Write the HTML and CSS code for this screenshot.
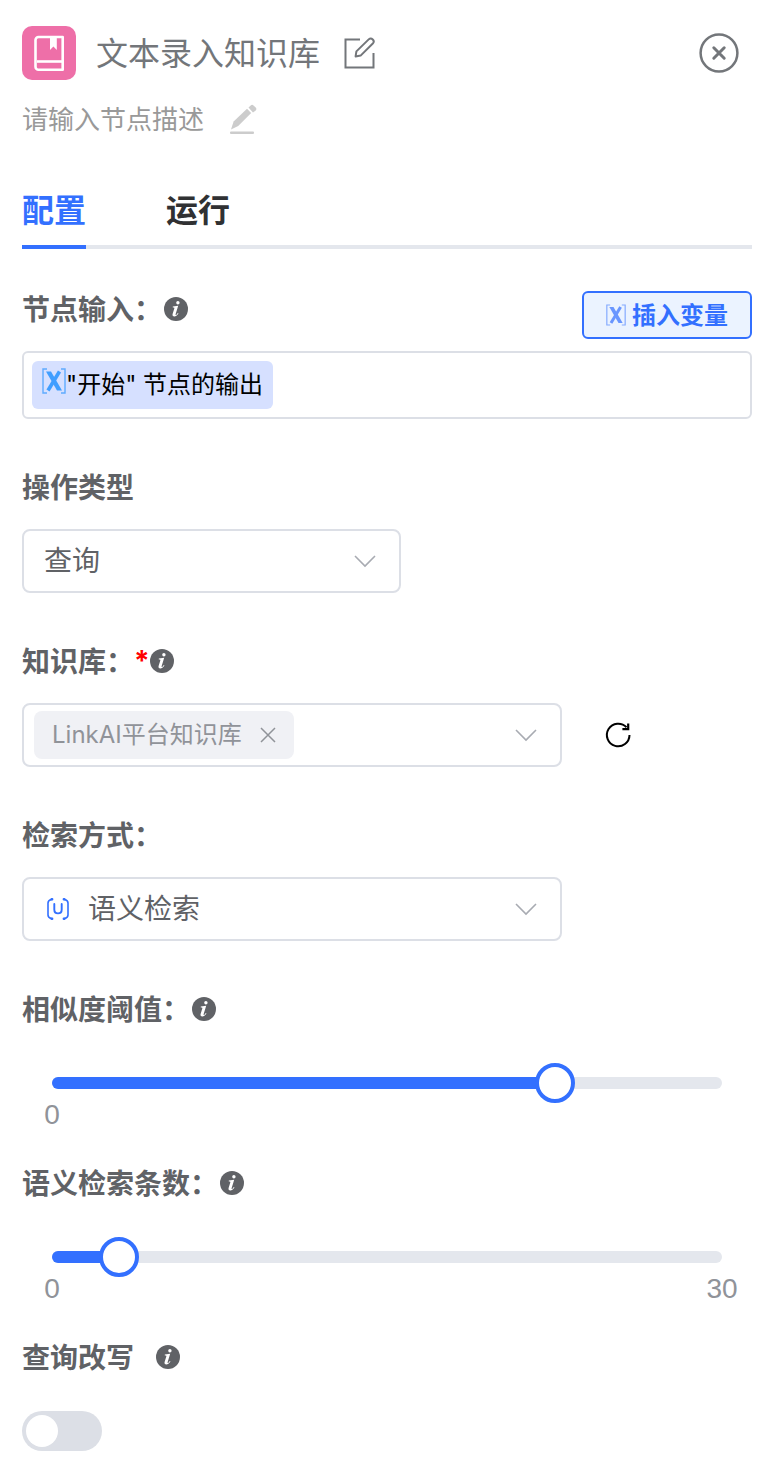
FILE: index.html
```html
<!DOCTYPE html>
<html lang="zh-CN">
<head>
<meta charset="utf-8">
<meta name="viewport" content="width=device-width, initial-scale=1">
<title>文本录入知识库</title>
<link rel="stylesheet" href="styles.css">
</head>
<body>
<svg class="sprite" aria-hidden="true">
  <symbol id="info" viewBox="0 0 24 24">
    <circle cx="12" cy="12" r="12" fill="#606266"/>
    <circle cx="13.900" cy="5.800" r="1.700" fill="#fff"/>
    <path d="M8.800 9.600l5.400-.9-2.600 8.500c-.3 1 .4.9 1.100.2l1.100-1.300.7.5c-1.400 2.100-2.800 2.900-4.100 2.900-1.600 0-2.200-.9-1.800-2.400l1.700-5.500c.3-.9.1-1.100-1.500-1.100z" fill="#fff"/>
  </symbol>
  <symbol id="chevron" viewBox="0 0 24 24">
    <path d="M2 7l10 10L22 7" fill="none" stroke="#a8abb2" stroke-width="1.600"/>
  </symbol>
  <symbol id="variable" viewBox="0 0 24 26">
    <path d="M5 1H1v24h4M19 1h4v24h-4" fill="none" stroke="currentColor" stroke-width="1.400" opacity=".8"/>
    <path d="M4 3.500h5l11 19h-5z" fill="currentColor"/>
    <path d="M17.500 3.500L6 22.500" stroke="currentColor" stroke-width="3.600"/>
  </symbol>
</svg>

<main class="panel">
  <header class="header">
    <svg class="logo" viewBox="0 0 54 54" aria-hidden="true">
      <rect width="54" height="54" rx="10" fill="#ee6fa8"/>
      <path d="M16.500 11h24.200v32.800H16.500a3 3 0 0 1-3-3V14a3 3 0 0 1 3-3z" fill="none" stroke="#fff" stroke-width="2.600" stroke-linejoin="round"/>
      <path d="M15 35.500h25" stroke="#fff" stroke-width="2.600"/>
      <path d="M28 11h6.800v13l-3.400-3.600L28 24z" fill="#fff"/>
    </svg>
    <h1 class="title">文本录入知识库</h1>
    <button class="icon-button title-edit" type="button" aria-label="编辑名称">
      <svg width="32" height="32" viewBox="0 0 32 32" fill="none" stroke="#73767a" stroke-width="2">
        <path d="M16 2.500H1.500v28h28V16"/>
        <path d="M11.600 19.400l.8-5L24.700 2.400a2.900 2.900 0 0 1 4.100 4.100L16.600 18.600z" stroke-linejoin="round"/>
      </svg>
    </button>
    <button class="icon-button close" type="button" aria-label="关闭">
      <svg width="40" height="40" viewBox="0 0 40 40" fill="none" stroke="#73767a" stroke-linecap="round">
        <circle cx="20" cy="20" r="18.400" stroke-width="2.500"/>
        <path d="M14.800 14.800l10.400 10.400M25.200 14.800L14.800 25.200" stroke-width="3"/>
      </svg>
    </button>
  </header>

  <div class="description">
    <span>请输入节点描述</span>
    <button class="icon-button" type="button" aria-label="编辑描述">
      <svg width="28" height="32" viewBox="0 0 28 32" fill="#ccc">
        <path d="M1 25.500l2.600-8L17 4.800l4.200 4.200L8.200 22z"/>
        <path d="M18.500 3.500L20.700 1.400a2 2 0 0 1 2.800 0l2.200 2.200a2 2 0 0 1 0 2.800L23 8.600z"/>
        <rect y="27.500" width="24" height="2.500" rx="1"/>
      </svg>
    </button>
  </div>

  <nav class="tabs" role="tablist">
    <button class="tab tab-active" type="button" role="tab" aria-selected="true">配置</button>
    <button class="tab" type="button" role="tab" aria-selected="false">运行</button>
  </nav>

  <form class="form">
    <div class="field">
      <div class="input-head">
        <label class="label" for="node-input"><span class="label-text">节点输入：</span><svg class="info"><use href="#info"/></svg></label>
        <button class="insert" type="button"><svg class="insert-icon"><use href="#variable"/></svg><span class="insert-text">插入变量</span></button>
      </div>
      <div class="token-box">
        <span class="token"><svg class="token-icon"><use href="#variable"/></svg>"开始" 节点的输出</span>
        <input class="token-input" id="node-input" type="text">
      </div>
    </div>

    <div class="field">
      <label class="label" for="operation"><span class="label-text">操作类型</span></label>
      <div class="select select-small">
        <select class="native" id="operation"><option>查询</option></select>
        <svg class="chevron"><use href="#chevron"/></svg>
      </div>
    </div>

    <div class="field">
      <label class="label" for="knowledge"><span class="label-text">知识库：</span><span class="required">*</span><svg class="info"><use href="#info"/></svg></label>
      <div class="select-row">
        <div class="select">
          <button class="native" id="knowledge" type="button" aria-haspopup="listbox"></button>
          <span class="tag"><span class="tag-text">LinkAI平台知识库</span>
            <button class="icon-button" type="button" aria-label="移除">
              <svg width="16" height="16" viewBox="0 0 16 16" stroke="#909399" stroke-width="1.500"><path d="M1 1l14 14M15 1L1 15"/></svg>
            </button>
          </span>
          <svg class="chevron"><use href="#chevron"/></svg>
        </div>
        <button class="icon-button" type="button" aria-label="刷新">
          <svg width="28" height="28" viewBox="0 0 28 28" fill="none" stroke="#000" stroke-width="2">
            <path d="M25.500 14A11.300 11.300 0 1 1 22.500 6.300"/>
            <path d="M24.200 2.600v5.600h-5.800" stroke-width="2.200"/>
          </svg>
        </button>
      </div>
    </div>

    <div class="field">
      <label class="label" for="retrieval"><span class="label-text">检索方式：</span></label>
      <div class="select">
        <select class="native native-icon" id="retrieval"><option>语义检索</option></select>
        <svg class="select-icon" viewBox="0 0 24 24" fill="none" stroke="#3370ff" stroke-width="1.600" stroke-linecap="round">
          <path d="M5.500 2.500C3 3 2 4 2 6v12c0 2 1 3 3.500 3.500M18.500 2.500C21 3 22 4 22 6v12c0 2-1 3-3.500 3.500"/>
          <path d="M8.300 7v5.500c0 5.200 7.400 5.200 7.400 0V7" stroke-width="1.900"/>
          <path d="M5.600 2.300h.6M17.800 2.300h.6M5.600 21.700h.6M17.800 21.700h.6" stroke-width="2.400"/>
        </svg>
        <svg class="chevron"><use href="#chevron"/></svg>
      </div>
    </div>

    <div class="field field-slider">
      <label class="label" for="similarity"><span class="label-text">相似度阈值：</span><svg class="info"><use href="#info"/></svg></label>
      <div class="slider">
        <div class="rail"><div class="fill" style="width:75%"></div></div>
        <input class="range" id="similarity" type="range" min="0" max="1" step="0.01" value="0.75">
      </div>
      <div class="marks"><span class="mark">0</span></div>
    </div>

    <div class="field field-slider">
      <label class="label" for="count"><span class="label-text">语义检索条数：</span><svg class="info"><use href="#info"/></svg></label>
      <div class="slider">
        <div class="rail"><div class="fill" style="width:10%"></div></div>
        <input class="range" id="count" type="range" min="0" max="30" value="3">
      </div>
      <div class="marks"><span class="mark">0</span><span class="mark">30</span></div>
    </div>

    <div class="field">
      <label class="label label-spaced" for="rewrite"><span class="label-text">查询改写</span><svg class="info"><use href="#info"/></svg></label>
      <div class="switch-row"><input class="switch" id="rewrite" type="checkbox" role="switch"></div>
    </div>
  </form>
</main>
</body>
</html>
```

FILE: styles.css
```css
* {
  box-sizing: border-box;
}

body {
  margin: 0;
  background: #fff;
  color: #606266;
  font-family: "Liberation Sans", "Noto Sans CJK SC", sans-serif;
  font-size: 28px;
}

button,
input,
select {
  margin: 0;
  font: inherit;
  color: inherit;
}

svg {
  display: block;
  flex: none;
}

.sprite {
  position: absolute;
  width: 0;
  height: 0;
}

.panel {
  padding: 26px 13px 20px 22px;
  padding-right: 12px;
}

.icon-button {
  display: flex;
  padding: 0;
  border: 0;
  background: none;
  cursor: pointer;
}

.header {
  display: flex;
  align-items: center;
  padding-right: 13px;
}

.logo {
  width: 54px;
  height: 54px;
}

.title {
  margin: 0 0 0 20px;
  padding-top: 2px;
  font-size: 32px;
  font-weight: 400;
  line-height: 52px;
  color: #73767a;
}

.title-edit {
  margin-left: 24px;
}

.close {
  margin-left: auto;
}

.description {
  display: flex;
  align-items: center;
  gap: 26px;
  margin-top: 20px;
  font-size: 26px;
  line-height: 40px;
  color: #999;
}

.tabs {
  display: flex;
  gap: 80px;
  margin: 32px 0 38px;
  box-shadow: inset 0 -4px #e4e7ed;
}

.tab {
  height: 77px;
  padding: 4px 0 0;
  border: 0;
  border-bottom: 4px solid transparent;
  background: none;
  font-size: 32px;
  font-weight: 700;
  line-height: 64px;
  color: #303133;
}

.tab-active {
  border-color: #3370ff;
  color: #3370ff;
}

.field {
  margin-bottom: 46px;
}

.field-slider {
  margin-bottom: 34px;
}

.label {
  display: flex;
  align-items: center;
  height: 44px;
  margin-bottom: 20px;
  font-weight: 700;
}

.label-text {
  padding-bottom: 2px;
}

.label-spaced {
  gap: 20px;
}

.info {
  width: 24px;
  height: 24px;
  margin-left: 2px;
}

.required {
  width: 14px;
  font-family: Inter, sans-serif;
  text-align: center;
  color: #f00;
}

.input-head {
  display: flex;
  align-items: flex-start;
  justify-content: space-between;
  margin-bottom: 12px;
}

.input-head .label {
  margin: 0;
}

.insert {
  display: flex;
  align-items: center;
  gap: 6px;
  height: 48px;
  margin-top: 4px;
  padding: 0 22px;
  border: 2px solid #3370ff;
  border-radius: 6px;
  background: #ebf3ff;
  font-size: 24px;
  font-weight: 700;
  color: #3370ff;
}

.insert-icon {
  width: 20px;
  height: 22px;
  opacity: 0.7;
}

.insert-text {
  padding-bottom: 4px;
}

.token-box {
  display: flex;
  padding: 8px;
  border: 2px solid #dcdfe6;
  border-radius: 6px;
}

.token {
  display: flex;
  flex: none;
  height: 48px;
  padding: 0 10px;
  border-radius: 6px;
  background: #d6e0ff;
  font-family: Inter, "Noto Sans CJK SC", sans-serif;
  font-size: 24px;
  line-height: 48px;
  color: #000;
}

.token-icon {
  width: 24px;
  height: 26px;
  margin-top: 7px;
  color: #409eff;
}

.token-input {
  flex: 1;
  min-width: 0;
  padding: 0 8px;
  border: 0;
  outline: 0;
  background: none;
}

.select-row {
  display: flex;
  align-items: center;
  gap: 42px;
}

.select {
  display: grid;
  align-items: center;
  width: 100%;
  max-width: 540px;
}

.select-small {
  max-width: 379px;
}

.select > * {
  grid-area: 1 / 1;
}

.native {
  appearance: none;
  width: 100%;
  height: 64px;
  padding: 0 60px 0 20px;
  border: 2px solid #dcdfe6;
  border-radius: 8px;
  background: #fff;
  color: #606266;
}

.native-icon {
  padding-left: 64px;
}

.chevron {
  justify-self: end;
  width: 24px;
  height: 24px;
  margin-right: 24px;
  pointer-events: none;
}

.select-icon {
  width: 24px;
  height: 24px;
  margin-left: 24px;
  pointer-events: none;
}

.tag {
  display: flex;
  align-items: center;
  justify-self: start;
  gap: 18px;
  height: 48px;
  margin-left: 12px;
  padding: 0 18px;
  border-radius: 8px;
  background: #f0f1f5;
  font-family: Inter, "Noto Sans CJK SC", sans-serif;
  font-size: 24px;
  color: #909399;
}

.tag-text {
  padding-bottom: 6px;
}

.slider {
  display: grid;
  align-items: center;
  margin: 32px 10px 0;
}

.slider > * {
  grid-area: 1 / 1;
}

.rail {
  height: 12px;
  margin: 0 20px;
  border-radius: 6px;
  background: #e4e7ed;
}

.fill {
  height: 12px;
  border-radius: 6px;
  background: #3370ff;
}

.range {
  appearance: none;
  width: 100%;
  height: 40px;
  background: none;
}

.range::-webkit-slider-thumb {
  appearance: none;
  width: 40px;
  height: 40px;
  border: 4px solid #3370ff;
  border-radius: 50%;
  background: #fff;
}

.marks {
  display: flex;
  justify-content: space-between;
  margin: 0 10px;
  line-height: 24px;
  color: #909399;
}

.mark {
  width: 40px;
  text-align: center;
}

.switch-row {
  display: flex;
  align-items: center;
  height: 64px;
}

.field:last-child {
  margin-bottom: 0;
}

.switch {
  appearance: none;
  display: flex;
  width: 80px;
  height: 40px;
  padding: 4px;
  border-radius: 20px;
  background: #dcdfe6;
}

.switch::before {
  content: "";
  width: 32px;
  height: 32px;
  border-radius: 50%;
  background: #fff;
}

.switch:checked {
  justify-content: flex-end;
  background: #3370ff;
}
```
